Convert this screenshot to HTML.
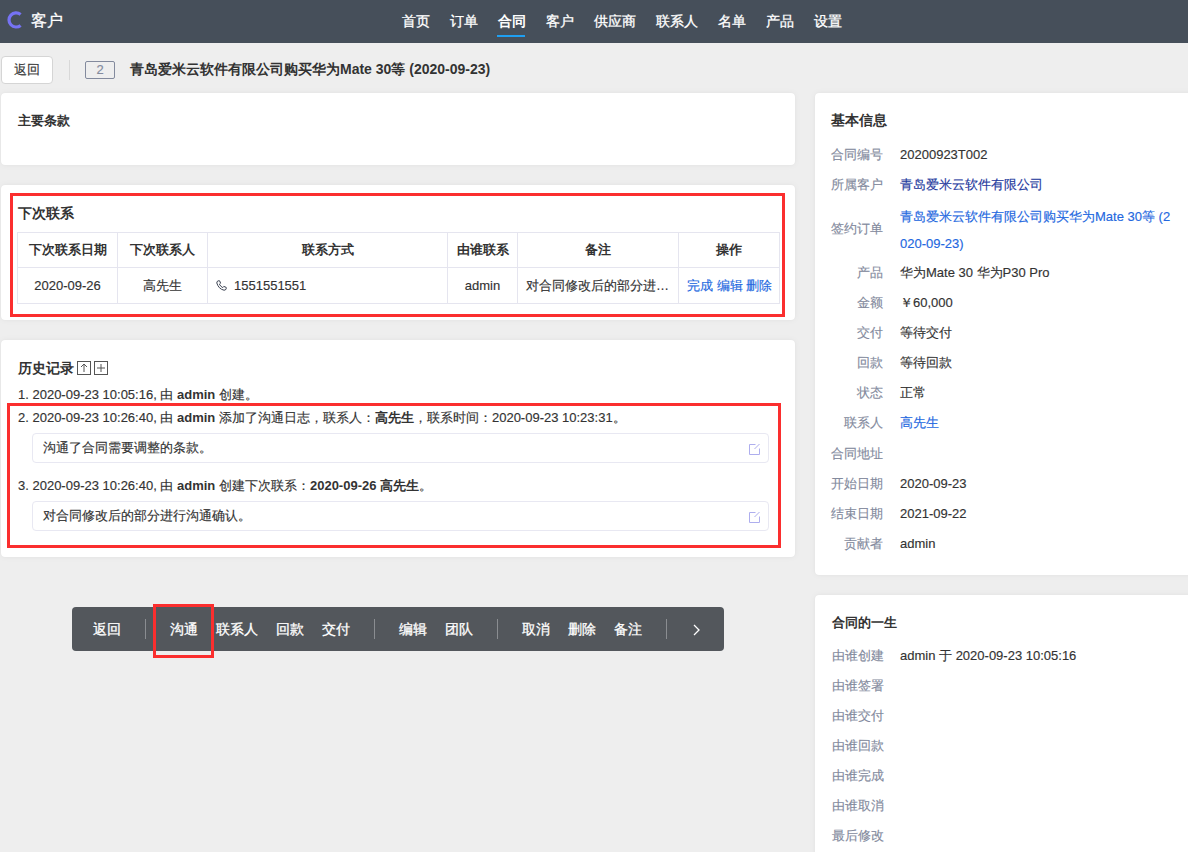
<!DOCTYPE html>
<html><head><meta charset="utf-8">
<style>
*{box-sizing:border-box;margin:0;padding:0}
html,body{width:1188px;height:852px;overflow:hidden}
body{background:#eeeeee;font-family:"Liberation Sans",sans-serif;font-size:13px;color:#333;-webkit-text-stroke-width:0.15px;position:relative}
.abs{position:absolute}
#hdr{left:0;top:0;width:1188px;height:43px;background:#464f5a}
#logo{left:7px;top:11px}
#brand{left:31px;top:11px;font-size:16px;color:#fff;-webkit-text-stroke:0.3px #fff;line-height:20px}
.nav{top:11px;font-size:14px;color:#fff;-webkit-text-stroke:0.3px #fff;line-height:20px;white-space:nowrap}
.nav.act{font-weight:bold;-webkit-text-stroke-width:0}
#navline{left:497px;top:35px;width:28px;height:2px;background:#1e9ff2}
.btn{background:#fff;border:1px solid #d5d5d5;border-radius:4px;text-align:center;color:#333}
.card{background:#fff;border-radius:4px;box-shadow:0 0 1px rgba(0,0,0,.06),0 0 6px rgba(0,0,0,.05)}
.ttl{font-weight:bold;color:#333;font-size:13px;line-height:20px;white-space:nowrap}
.red{border:3px solid #fb2e2e}
table.tb{border-collapse:collapse;table-layout:fixed}
table.tb td,table.tb th{border:1px solid #e5e5ef;padding:0 8px;white-space:nowrap;overflow:hidden}
table.tb th{font-weight:bold;text-align:center;height:35px}
table.tb td{height:36px}
a{color:#2468e0;text-decoration:none}
.hist{left:18px;line-height:20px;white-space:nowrap;color:#333}
.hist b{font-weight:bold}
.cmt{left:32px;width:737px;height:30px;border:1px solid #e8e8f2;border-radius:4px;padding-left:10px;line-height:28px;color:#333}
.tbar{left:72px;top:607px;width:652px;height:44px;background:#53575c;border-radius:4px}
.tbi{top:12px;font-size:14px;color:#fff;-webkit-text-stroke:0.3px #fff;line-height:20px;white-space:nowrap}
.tsep{top:12px;width:1px;height:20px;background:#8a8d91}
.lbl{color:#838a9d;text-align:right;width:60px;white-space:nowrap;line-height:20px}
.val{left:85px;white-space:nowrap;line-height:20px;color:#333}
b,th,.ttl,.bt{-webkit-text-stroke-width:0}
</style></head><body>

<div id="hdr" class="abs">
  <svg class="abs" style="left:0;top:0" width="30" height="40" viewBox="0 0 30 40"><path d="M20.6 14.4 A7.1 7.1 0 1 0 20.6 25.4" fill="none" stroke="#7673f4" stroke-width="3.2"/></svg>
  <div id="brand" class="abs">客户</div>
  <div class="nav abs" style="left:402px">首页</div>
  <div class="nav abs" style="left:450px">订单</div>
  <div class="nav abs act" style="left:498px">合同</div>
  <div class="nav abs" style="left:546px">客户</div>
  <div class="nav abs" style="left:594px">供应商</div>
  <div class="nav abs" style="left:656px">联系人</div>
  <div class="nav abs" style="left:718px">名单</div>
  <div class="nav abs" style="left:766px">产品</div>
  <div class="nav abs" style="left:814px">设置</div>
  <div id="navline" class="abs"></div>
</div>

<!-- title row -->
<div class="abs btn" style="left:1px;top:56px;width:52px;height:28px;line-height:26px">返回</div>
<div class="abs" style="left:69px;top:60px;width:1px;height:20px;background:#d8d8d8"></div>
<div class="abs" style="left:85px;top:61px;width:30px;height:18px;border:1px solid #838a9d;border-radius:2px;color:#838a9d;text-align:center;line-height:16px">2</div>
<div class="abs bt" style="left:130px;top:59px;font-size:14px;font-weight:bold;line-height:20px;white-space:nowrap;color:#333">青岛爱米云软件有限公司购买华为Mate 30等 (2020-09-23)</div>

<!-- card 1 -->
<div class="abs card" style="left:1px;top:93px;width:794px;height:72px">
  <div class="abs ttl" style="left:17px;top:18px">主要条款</div>
</div>

<!-- card 2 -->
<div class="abs card" style="left:1px;top:185px;width:794px;height:135px">
  <div class="abs ttl" style="left:17px;top:18px;font-size:14px">下次联系</div>
  <table class="tb abs" style="left:16px;top:47px;width:762px">
    <colgroup><col style="width:100px"><col style="width:90px"><col style="width:240px"><col style="width:70px"><col style="width:161px"><col style="width:101px"></colgroup>
    <tr><th>下次联系日期</th><th>下次联系人</th><th>联系方式</th><th>由谁联系</th><th>备注</th><th>操作</th></tr>
    <tr><td style="text-align:center">2020-09-26</td><td style="text-align:center">高先生</td>
      <td><svg width="11" height="11" viewBox="0 0 11 11" style="vertical-align:-1px;margin-right:7px"><path d="M2.2 0.8 L3.6 0.8 L4.6 3.2 L3.4 4.2 Q4.6 6.6 6.8 7.6 L7.8 6.4 L10.2 7.4 L10.2 8.8 Q9.6 10.4 8 10.2 Q2.6 9 0.8 3 Q0.6 1.4 2.2 0.8 Z" fill="none" stroke="#3c4353" stroke-width="1"/></svg>1551551551</td>
      <td style="text-align:center">admin</td>
      <td style="text-overflow:ellipsis">对合同修改后的部分进行沟通确认。</td>
      <td style="text-align:center"><a>完成</a> <a>编辑</a> <a>删除</a></td></tr>
  </table>
</div>
<div class="abs red" style="left:10px;top:193px;width:775px;height:124px"></div>

<!-- card 3 -->
<div class="abs card" style="left:1px;top:340px;width:794px;height:217px">
  <div class="abs ttl" style="left:17px;top:18px;font-size:14px">历史记录</div>
  <svg class="abs" style="left:76px;top:21px" width="32" height="14" viewBox="0 0 32 14">
    <rect x="0.5" y="0.5" width="13" height="13" fill="none" stroke="#555" stroke-width="1"/>
    <path d="M7 3 L7 11 M4 6 L7 3 L10 6" fill="none" stroke="#555" stroke-width="1"/>
    <rect x="17.5" y="0.5" width="13" height="13" fill="none" stroke="#555" stroke-width="1"/>
    <path d="M24 3 L24 11 M20 7 L28 7" fill="none" stroke="#555" stroke-width="1"/>
  </svg>
</div>
<div class="abs hist" style="top:385px">1. 2020-09-23 10:05:16, 由 <b>admin</b> 创建。</div>
<div class="abs hist" style="top:408px">2. 2020-09-23 10:26:40, 由 <b>admin</b> 添加了沟通日志，联系人：<b>高先生</b>，联系时间：2020-09-23 10:23:31。</div>
<div class="abs cmt" style="top:433px">沟通了合同需要调整的条款。</div>
<div class="abs hist" style="top:476px">3. 2020-09-23 10:26:40, 由 <b>admin</b> 创建下次联系：<b>2020-09-26 高先生</b>。</div>
<div class="abs cmt" style="top:501px">对合同修改后的部分进行沟通确认。</div>
<svg class="abs" style="left:748px;top:443px" width="13" height="13" viewBox="0 0 13 13"><path d="M7.5 1.5 L1.5 1.5 L1.5 11.5 L11.5 11.5 L11.5 5.5 M6.5 6 L11.5 1" fill="none" stroke="#aeaeee" stroke-width="1"/></svg>
<svg class="abs" style="left:748px;top:511px" width="13" height="13" viewBox="0 0 13 13"><path d="M7.5 1.5 L1.5 1.5 L1.5 11.5 L11.5 11.5 L11.5 5.5 M6.5 6 L11.5 1" fill="none" stroke="#aeaeee" stroke-width="1"/></svg>
<div class="abs red" style="left:7px;top:403px;width:774px;height:145px"></div>

<!-- toolbar -->
<div class="abs tbar">
  <div class="abs tbi" style="left:21px">返回</div>
  <div class="abs tsep" style="left:73px"></div>
  <div class="abs tbi" style="left:98px">沟通</div>
  <div class="abs tbi" style="left:144px">联系人</div>
  <div class="abs tbi" style="left:204px">回款</div>
  <div class="abs tbi" style="left:250px">交付</div>
  <div class="abs tsep" style="left:302px"></div>
  <div class="abs tbi" style="left:327px">编辑</div>
  <div class="abs tbi" style="left:373px">团队</div>
  <div class="abs tsep" style="left:425px"></div>
  <div class="abs tbi" style="left:450px">取消</div>
  <div class="abs tbi" style="left:496px">删除</div>
  <div class="abs tbi" style="left:542px">备注</div>
  <div class="abs tsep" style="left:594px"></div>
  <svg class="abs" style="left:620px;top:17px" width="10" height="12" viewBox="0 0 10 12"><path d="M2 1 L7 6 L2 11" fill="none" stroke="#fff" stroke-width="1.3"/></svg>
</div>
<div class="abs red" style="left:153px;top:604px;width:61px;height:54px"></div>

<!-- right card 4 -->
<div class="abs card" style="left:815px;top:93px;width:400px;height:482px">
  <div class="abs ttl" style="left:16px;top:17px;font-size:14px">基本信息</div>
  <div class="abs lbl" style="left:8px;top:52px">合同编号</div><div class="abs val" style="top:52px">20200923T002</div>
  <div class="abs lbl" style="left:8px;top:82px">所属客户</div><div class="abs val" style="top:82px"><a style="color:#1f3a9e">青岛爱米云软件有限公司</a></div>
  <div class="abs lbl" style="left:8px;top:126px">签约订单</div><div class="abs val" style="top:110px;line-height:27px;white-space:normal;width:290px"><a>青岛爱米云软件有限公司购买华为Mate 30等 (2<br>020-09-23)</a></div>
  <div class="abs lbl" style="left:8px;top:170px">产品</div><div class="abs val" style="top:170px">华为Mate 30 华为P30 Pro</div>
  <div class="abs lbl" style="left:8px;top:200px">金额</div><div class="abs val" style="top:200px">￥60,000</div>
  <div class="abs lbl" style="left:8px;top:230px">交付</div><div class="abs val" style="top:230px">等待交付</div>
  <div class="abs lbl" style="left:8px;top:260px">回款</div><div class="abs val" style="top:260px">等待回款</div>
  <div class="abs lbl" style="left:8px;top:290px">状态</div><div class="abs val" style="top:290px">正常</div>
  <div class="abs lbl" style="left:8px;top:320px">联系人</div><div class="abs val" style="top:320px"><a>高先生</a></div>
  <div class="abs lbl" style="left:8px;top:351px">合同地址</div>
  <div class="abs lbl" style="left:8px;top:381px">开始日期</div><div class="abs val" style="top:381px">2020-09-23</div>
  <div class="abs lbl" style="left:8px;top:411px">结束日期</div><div class="abs val" style="top:411px">2021-09-22</div>
  <div class="abs lbl" style="left:8px;top:441px">贡献者</div><div class="abs val" style="top:441px">admin</div>
</div>

<!-- right card 5 -->
<div class="abs card" style="left:815px;top:595px;width:400px;height:300px">
  <div class="abs ttl" style="left:17px;top:18px">合同的一生</div>
  <div class="abs lbl" style="left:17px;top:51px;text-align:left">由谁创建</div><div class="abs val" style="top:51px">admin 于 2020-09-23 10:05:16</div>
  <div class="abs lbl" style="left:17px;top:81px;text-align:left">由谁签署</div>
  <div class="abs lbl" style="left:17px;top:111px;text-align:left">由谁交付</div>
  <div class="abs lbl" style="left:17px;top:141px;text-align:left">由谁回款</div>
  <div class="abs lbl" style="left:17px;top:171px;text-align:left">由谁完成</div>
  <div class="abs lbl" style="left:17px;top:201px;text-align:left">由谁取消</div>
  <div class="abs lbl" style="left:17px;top:231px;text-align:left">最后修改</div>
</div>

</body></html>
